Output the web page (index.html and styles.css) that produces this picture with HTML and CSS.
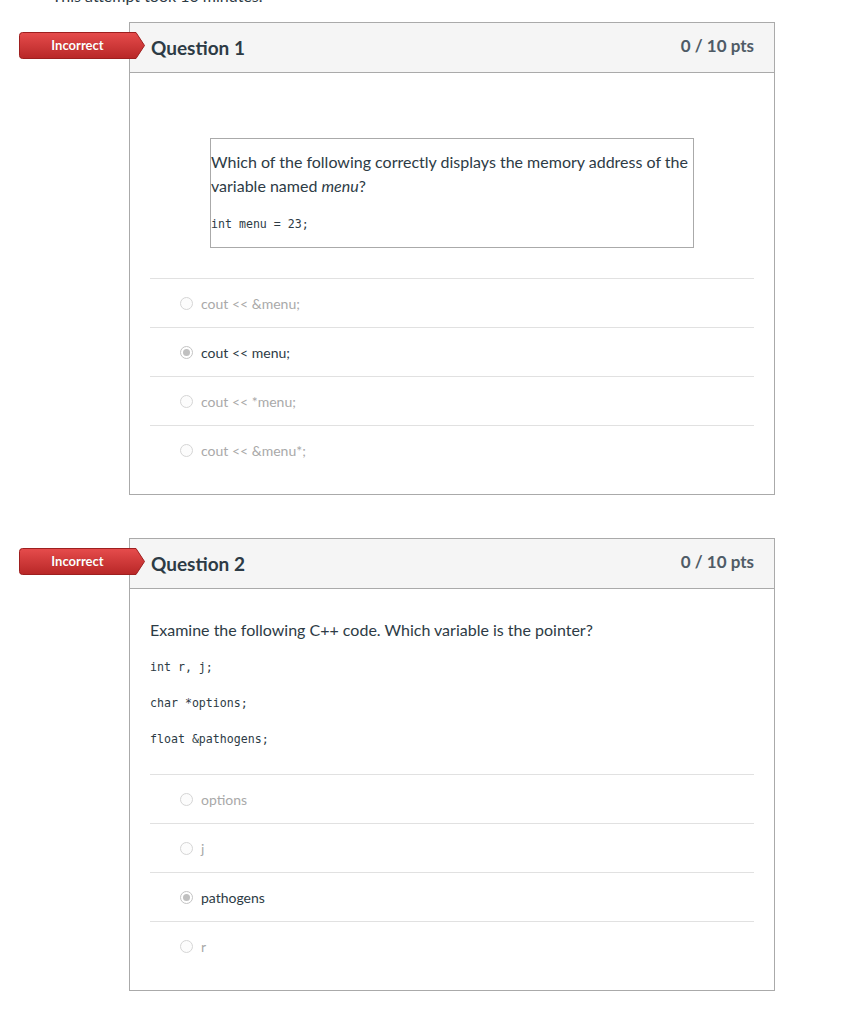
FILE: index.html
```html
<!DOCTYPE html>
<html>
<head>
<meta charset="utf-8">
<link rel="stylesheet" href="styles.css">
</head>
<body>
<div class="page">
  <div class="attempt">This attempt took 10 minutes.</div>

  <div class="question q1">
    <div class="badge">
      <svg class="badge-bg" width="127" height="28" viewBox="0 0 127 28">
        <defs>
          <linearGradient id="g1" x1="0" y1="0" x2="0" y2="1">
            <stop offset="0" stop-color="#e64c4c"/>
            <stop offset="1" stop-color="#b82727"/>
          </linearGradient>
        </defs>
        <path d="M0.5,3.5 Q0.5,0.5 3.5,0.5 H117 L125.5,13.5 L117,26.5 H3.5 Q0.5,26.5 0.5,23.5 Z" fill="url(#g1)" stroke="#9e1f1f" stroke-width="1"/>
      </svg>
      <span class="badge-text">Incorrect</span>
    </div>
    <div class="header">
      <span class="title">Question 1</span>
      <span class="pts">0 / 10 pts</span>
    </div>
    <div class="content c1">
      <div class="qbox">
        <p class="qtext">Which of the following correctly displays the memory address of the variable named <em>menu</em>?</p>
        <pre class="code code1">int menu = 23;</pre>
      </div>
      <div class="answers a1">
        <div class="answer"><span class="radio"></span><span class="atext">cout &lt;&lt; &amp;menu;</span></div>
        <div class="answer selected"><span class="radio"></span><span class="atext">cout &lt;&lt; menu;</span></div>
        <div class="answer"><span class="radio"></span><span class="atext">cout &lt;&lt; *menu;</span></div>
        <div class="answer"><span class="radio"></span><span class="atext">cout &lt;&lt; &amp;menu*;</span></div>
      </div>
    </div>
  </div>

  <div class="question q2">
    <div class="badge">
      <svg class="badge-bg" width="127" height="28" viewBox="0 0 127 28">
        <defs>
          <linearGradient id="g2" x1="0" y1="0" x2="0" y2="1">
            <stop offset="0" stop-color="#e64c4c"/>
            <stop offset="1" stop-color="#b82727"/>
          </linearGradient>
        </defs>
        <path d="M0.5,3.5 Q0.5,0.5 3.5,0.5 H117 L125.5,13.5 L117,26.5 H3.5 Q0.5,26.5 0.5,23.5 Z" fill="url(#g2)" stroke="#9e1f1f" stroke-width="1"/>
      </svg>
      <span class="badge-text">Incorrect</span>
    </div>
    <div class="header">
      <span class="title">Question 2</span>
      <span class="pts">0 / 10 pts</span>
    </div>
    <div class="content c2">
      <p class="qtext2">Examine the following C++ code. Which variable is the pointer?</p>
      <pre class="code cl first">int r, j;</pre>
      <pre class="code cl">char *options;</pre>
      <pre class="code cl">float &amp;pathogens;</pre>
      <div class="answers a2">
        <div class="answer"><span class="radio"></span><span class="atext">options</span></div>
        <div class="answer"><span class="radio"></span><span class="atext">j</span></div>
        <div class="answer selected"><span class="radio"></span><span class="atext">pathogens</span></div>
        <div class="answer"><span class="radio"></span><span class="atext">r</span></div>
      </div>
    </div>
  </div>
</div>
</body>
</html>
```

FILE: styles.css
```css
html, body {
  margin: 0;
  padding: 0;
  background: #fff;
}
body {
  font-family: Lato, "Open Sans", sans-serif;
  color: #2d3b45;
}
.page {
  padding-left: 129px;
  width: 646px;
}
.attempt {
  margin-left: -77px;
  margin-top: -15px;
  margin-bottom: 15px;
  height: 22px;
  line-height: 22px;
  font-size: 16px;
  color: #2d3b45;
}
.question {
  position: relative;
  border: 1px solid #aaaaaa;
  box-sizing: border-box;
  width: 646px;
}
.q2 {
  margin-top: 43px;
}
.badge {
  position: absolute;
  left: -111px;
  top: 9px;
  width: 127px;
  height: 28px;
}
.badge-bg {
  position: absolute;
  left: 0;
  top: 0;
  display: block;
}
.badge-text {
  position: relative;
  display: block;
  width: 117px;
  text-align: center;
  line-height: 27px;
  font-size: 13px;
  font-weight: 700;
  color: #fff;
  text-shadow: 0 0 1px rgba(120,0,0,0.4);
}
.header {
  background: #f5f5f5;
  border-bottom: 1px solid #aaaaaa;
  height: 49px;
  display: flex;
  justify-content: space-between;
  padding: 0 20px 0 21px;
}
.title {
  font-size: 19px;
  font-weight: 700;
  line-height: 50px;
  color: #2d3b45;
}
.pts {
  font-size: 17px;
  font-weight: 700;
  line-height: 46px;
  color: #4f5b66;
}
.content {
  padding: 0 20px 20px 20px;
}
.c1 {
  padding-top: 65px;
}
.qbox {
  margin-left: 60px;
  width: 484px;
  box-sizing: border-box;
  border: 1px solid #aaaaaa;
  height: 110px;
}
.qtext {
  margin: 11px 0 0 0;
  font-size: 16px;
  line-height: 24px;
}
.code {
  font-family: "DejaVu Sans Mono", "Liberation Mono", monospace;
  font-size: 11.6px;
  line-height: 18px;
  margin: 0;
  color: #2d3b45;
}
.code1 {
  margin-top: 17px;
}
.a1 {
  margin-top: 30px;
}
.c2 {
  padding-top: 29px;
  padding-bottom: 20px;
}
.qtext2 {
  margin: 0;
  font-size: 16px;
  line-height: 24px;
}
.cl {
  margin-top: 18px;
}
.cl.first {
  margin-top: 16px;
}
.a2 {
  margin-top: 26px;
}
.answer {
  border-top: 1px solid #e1e1e1;
  height: 48px;
  display: flex;
  align-items: center;
  padding-left: 30px;
}
.radio {
  width: 11px;
  height: 11px;
  border: 1px solid #d5d5d5;
  border-radius: 50%;
  box-sizing: content-box;
  background: #fcfcfc;
  margin-right: 8px;
  position: relative;
}
.selected .radio {
  border-color: #c4c4c4;
  background: #fff;
}
.selected .radio::after {
  content: "";
  position: absolute;
  left: 2px;
  top: 2px;
  width: 7px;
  height: 7px;
  border-radius: 50%;
  background: #c0c0c0;
}
.atext {
  font-size: 14px;
  color: #a9a9a9;
}
.selected .atext {
  color: #2d3b45;
}
```
